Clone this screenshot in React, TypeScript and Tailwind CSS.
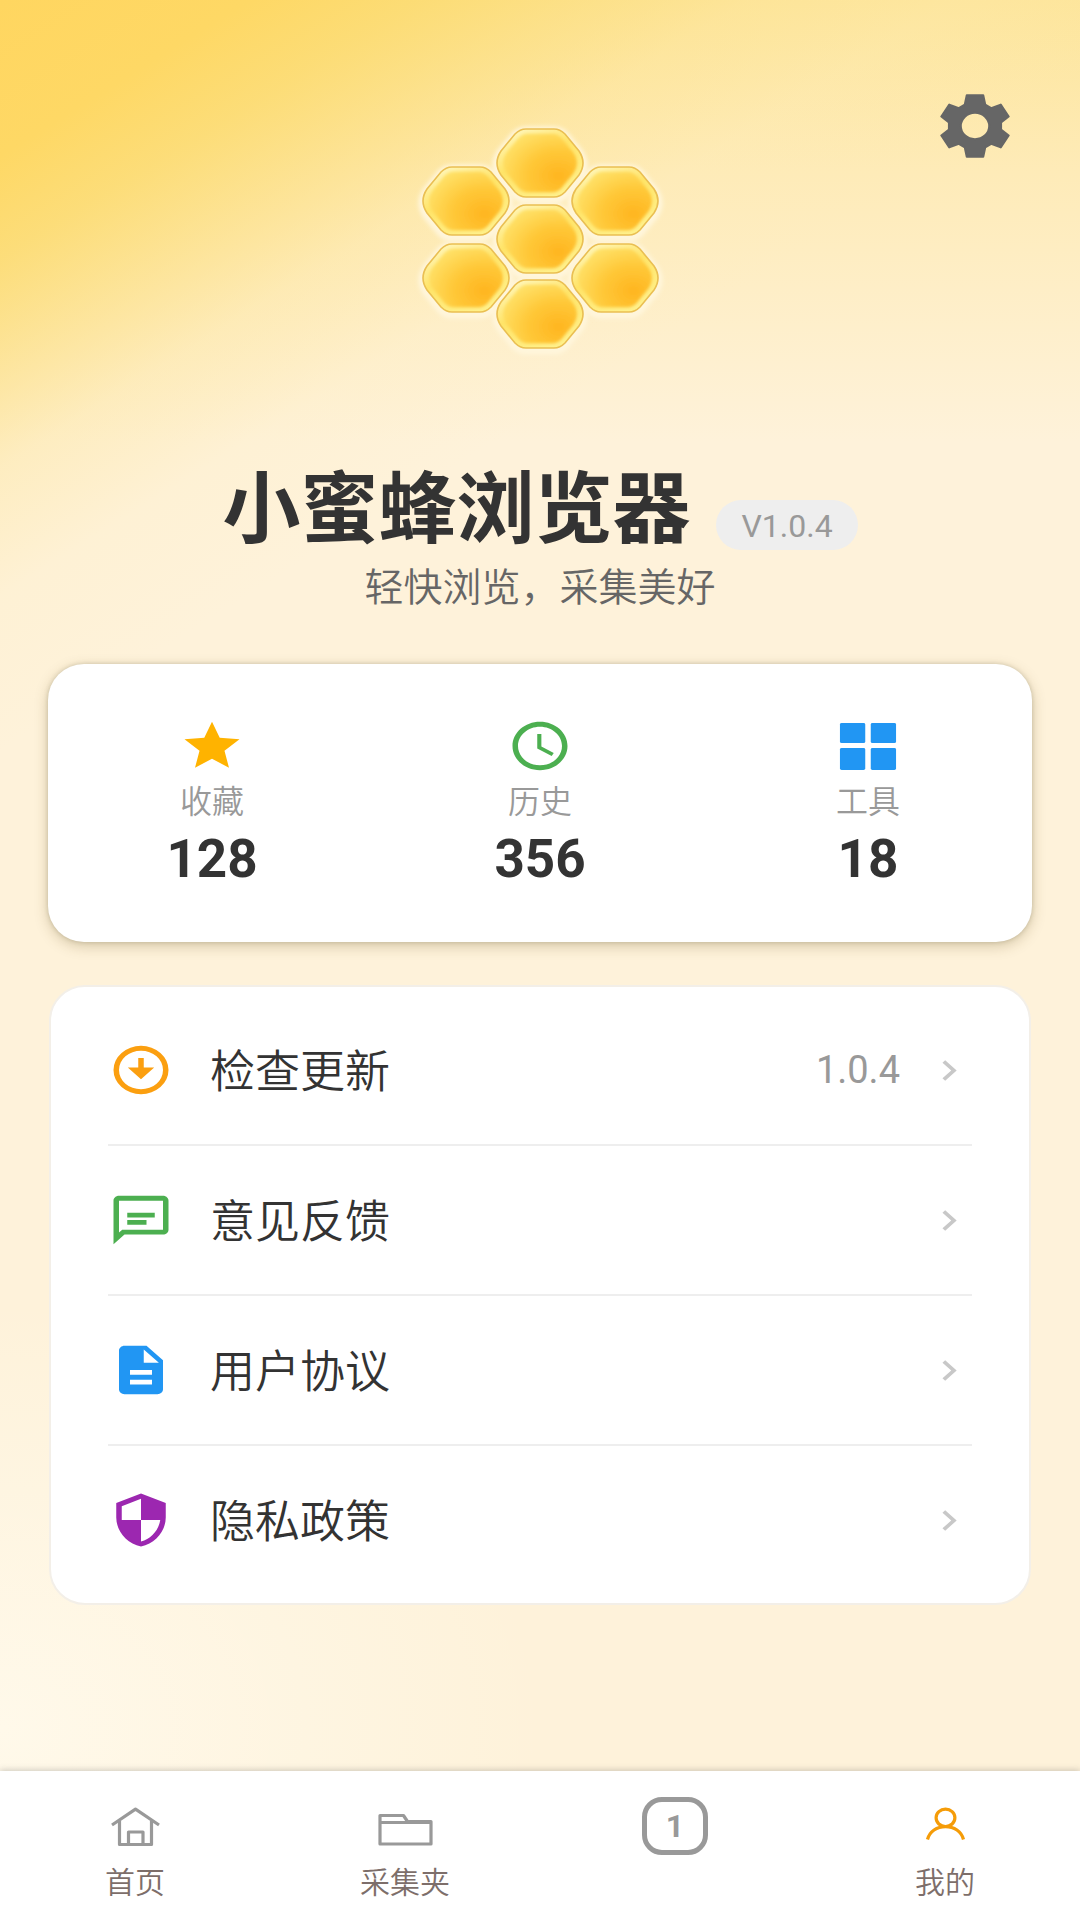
// Profile ("我的") page of the browser app.
// Header with the honeycomb logo, a stats card, a menu card and the bottom tab bar.

import type { ReactNode } from "react"

// Honeycomb logo

const CELLS = [
  [140, 53],
  [66, 91],
  [215, 91],
  [140, 129],
  [66, 168],
  [215, 168],
  [140, 204],
]

// One cell, centred on 0,0
const CELL_PATH =
  "M-14 -34H14Q20 -34 25 -29L39 -12Q47 0 39 12L25 29Q20 34 14 34H-14Q-20 34 -25 29L-39 12Q-47 0 -39 -12L-25 -29Q-20 -34 -14 -34Z"

function HoneycombLogo() {
  return (
    <svg className="w-[280px] h-[260px]" viewBox="0 0 280 260" role="img" aria-label="小蜜蜂浏览器">
      <defs>
        <radialGradient id="honey" cx="0.75" cy="0.72" r="0.85">
          <stop offset="0" stopColor="#ffb520" />
          <stop offset="0.5" stopColor="#ffc838" />
          <stop offset="1" stopColor="#ffe26a" />
        </radialGradient>
        <linearGradient id="rim" x1="0" y1="0" x2="0.6" y2="1">
          <stop offset="0" stopColor="#fffbd0" />
          <stop offset="0.5" stopColor="#ffe468" />
          <stop offset="1" stopColor="#fff08a" />
        </linearGradient>
        <filter id="glow" x="-20%" y="-20%" width="140%" height="140%">
          <feGaussianBlur stdDeviation="2" />
        </filter>
      </defs>
      {CELLS.map(([x, y]) => (
        <path key={`${x}-${y}`} d={CELL_PATH} transform={`translate(${x} ${y + 2})`} fill="#fff6dc" stroke="#fff6dc" strokeWidth="9" filter="url(#glow)" />
      ))}
      {CELLS.map(([x, y]) => (
        <g key={`${x}-${y}`} transform={`translate(${x} ${y})`}>
          <path d={CELL_PATH} fill="url(#rim)" stroke="#eabf52" strokeWidth="1.6" />
          <path d={CELL_PATH} transform="scale(0.86)" fill="url(#honey)" filter="url(#glow)" />
        </g>
      ))}
    </svg>
  )
}

// Shared icon wrapper, the paths are on a 24 grid

interface IconProps {
  className: string
  viewBox?: string
  children: ReactNode
}

function Icon({ className, viewBox = "0 0 24 24", children }: IconProps) {
  return (
    <svg className={className} viewBox={viewBox} preserveAspectRatio="none" fill="currentColor" aria-hidden="true">
      {children}
    </svg>
  )
}

// Stats card data

interface Stat {
  label: string
  value: number
  color: string
  icon: ReactNode
}

const STATS: Stat[] = [
  {
    label: "收藏",
    value: 128,
    color: "text-[#ffb300]",
    icon: <path d="M12 17.27L18.18 21l-1.64-7.03L22 9.24l-7.19-.61L12 2 9.19 8.63 2 9.24l5.46 4.73L5.82 21z" />,
  },
  {
    label: "历史",
    value: 356,
    color: "text-[#4caf50]",
    icon: (
      <path d="M11.99 2C6.47 2 2 6.48 2 12s4.47 10 9.99 10C17.52 22 22 17.52 22 12S17.52 2 11.99 2zM12 20c-4.42 0-8-3.58-8-8s3.58-8 8-8 8 3.58 8 8-3.58 8-8 8zm.5-13H11v6l5.25 3.15.75-1.23-4.5-2.67z" />
    ),
  },
  {
    label: "工具",
    value: 18,
    color: "text-[#2196f3]",
    icon: (
      <>
        <rect x="1.8" y="2.5" width="9.2" height="8.3" rx="0.6" />
        <rect x="13" y="2.5" width="9.2" height="8.3" rx="0.6" />
        <rect x="1.8" y="12.8" width="9.2" height="9.1" rx="0.6" />
        <rect x="13" y="12.8" width="9.2" height="9.1" rx="0.6" />
      </>
    ),
  },
]

// Menu card data

interface MenuItem {
  label: string
  extra?: string
  color: string
  icon: ReactNode
}

const MENU: MenuItem[] = [
  {
    label: "检查更新",
    extra: "1.0.4",
    color: "text-[#fb9f10]",
    icon: (
      <path d="M12 2a10 10 0 1 0 0 20 10 10 0 0 0 0-20zm0 18a8 8 0 1 1 0-16 8 8 0 0 1 0 16zM11 7h2v4h3.8L12 15.8 7.2 11H11z" />
    ),
  },
  {
    label: "意见反馈",
    color: "text-[#4caf50]",
    icon: (
      <path d="M20 2H4c-1.1 0-2 .9-2 2v18l4-4h14c1.1 0 2-.9 2-2V4c0-1.1-.9-2-2-2zm0 14H5.17L4 17.17V4h16zM7 9h10v2H7zm0 3h7v2H7z" />
    ),
  },
  {
    label: "用户协议",
    color: "text-[#2196f3]",
    icon: (
      <path d="M14 2H6c-1.1 0-2 .9-2 2v16c0 1.1.9 2 2 2h12c1.1 0 2-.9 2-2V8l-6-6zm2 16H8v-2h8v2zm0-4H8v-2h8v2zm-3-5V3.5L18.5 9H13z" />
    ),
  },
  {
    label: "隐私政策",
    color: "text-[#9c27b0]",
    icon: (
      <path d="M12 1L3 5v6c0 5.55 3.84 10.74 9 12 5.16-1.26 9-6.45 9-12V5l-9-4zm0 10.99h7c-.53 4.12-3.28 7.79-7 8.94V12H5V6.3l7-3.11v8.8z" />
    ),
  },
]

function Header() {
  return (
    <header>
      <div className="grid grid-cols-[1fr_auto_1fr] items-start px-[70px] pt-[94px]">
        <div className="col-start-2 mt-[16px]">
          <HoneycombLogo />
        </div>
        <button type="button" className="justify-self-end text-[#666666]" aria-label="设置">
          <Icon className="w-[70px] h-[64px]" viewBox="-106 -97 212 194">
            <path
              fillRule="evenodd"
              stroke="currentColor"
              strokeWidth="6"
              strokeLinejoin="round"
              d="M-25 -93H25L31 -65L49 -54L78 -65L102 -29L79 -11V11L102 29L78 65L49 54L31 65L25 93H-25L-31 65L-49 54L-78 65L-102 29L-79 11V-11L-102 -29L-78 -65L-49 -54L-31 -65ZM-43 0a43 40 0 1 0 86 0a43 40 0 1 0 -86 0Z"
            />
          </Icon>
        </button>
      </div>

      <div className="mt-[102px] flex items-end justify-center gap-[26px]">
        <h1 className="text-[78px] leading-[78px] font-bold text-[#333333]">小蜜蜂浏览器</h1>
        <span className="flex h-[50px] items-center rounded-full bg-[#eeeeee] px-[25px] pt-[2px] text-[32px] leading-[36px] text-[#999999]">
          V1.0.4
        </span>
      </div>
      <p className="mt-[13px] text-center text-[39px] leading-[50px] font-[350] text-[#666666]">轻快浏览，采集美好</p>
    </header>
  )
}

function StatsCard() {
  return (
    <section className="mt-[51px] grid grid-cols-3 rounded-[36px] bg-white pt-[53px] pb-[53px] shadow-[0_4px_14px_rgba(90,70,20,0.25),0_0_4px_rgba(90,90,60,0.25)]">
      {STATS.map((stat) => (
        <button key={stat.label} type="button" className="flex flex-col items-center">
          <Icon className={`w-[66px] h-[58px] ${stat.color}`}>{stat.icon}</Icon>
          <span className="mt-[7px] text-[32px] leading-[40px] font-[350] text-[#999999]">{stat.label}</span>
          <span className="mt-[7px] text-[53px] leading-[60px] font-bold text-[#333333]">{stat.value}</span>
        </button>
      ))}
    </section>
  )
}

function MenuCard() {
  return (
    <section className="mx-[1px] mt-[43px] rounded-[36px] border-2 border-[#f3efe8] bg-white px-[57px] py-[9px]">
      <ul className="divide-y-2 divide-[#eeeeee]">
        {MENU.map((item) => (
          <li key={item.label}>
            <button type="button" className="flex h-[148px] w-full items-center text-left">
              <Icon className={`w-[66px] h-[58px] ${item.color}`}>{item.icon}</Icon>
              <span className="ml-[36px] flex-1 pt-[6px] text-[45px] leading-[60px] font-[350] text-[#333333]">{item.label}</span>
              {item.extra && <span className="mr-[26px] text-[38px] leading-[60px] text-[#999999]">{item.extra}</span>}
              <Icon className="w-[46px] h-[41px] text-[#c8c8c8]">
                <path d="M10 6L8.59 7.41 13.17 12l-4.58 4.59L10 18l6-6z" />
              </Icon>
            </button>
          </li>
        ))}
      </ul>
    </section>
  )
}

// Bottom tab bar

interface TabProps {
  label?: string
  current?: boolean
  children: ReactNode
}

function Tab({ label, current, children }: TabProps) {
  return (
    <button
      type="button"
      className="flex flex-col items-center gap-[10px]"
      aria-label={label ?? "窗口"}
      aria-current={current ? "page" : undefined}
    >
      {children}
      {label && <span className="text-[30px] leading-[36px] font-[350] text-[#7d6e6a]">{label}</span>}
    </button>
  )
}

function TabBar() {
  return (
    <nav className="sticky bottom-0 mt-auto grid h-[149px] grid-cols-4 items-start bg-white pt-[26px] shadow-[0_-1px_6px_rgba(90,90,90,0.3)]">
      <Tab label="首页">
        <Icon className="w-[66px] h-[58px] text-[#999999]" viewBox="0 0 66 58">
          <g fill="none" stroke="currentColor" strokeWidth="3.2" strokeLinejoin="round">
            <path d="M10 28L33.5 12.2 57 28" />
            <path d="M17.5 24v23.5h32V24" />
            <path d="M26.5 48V35H41v13" />
          </g>
        </Icon>
      </Tab>
      <Tab label="采集夹">
        <Icon className="w-[66px] h-[58px] text-[#999999]" viewBox="0 0 66 58">
          <g fill="none" stroke="currentColor" strokeWidth="3.2" strokeLinejoin="round">
            <path d="M8 18.5h23.5l4 6H59V47H8z" />
            <path d="M8 25.5h51" />
          </g>
        </Icon>
      </Tab>
      <Tab>
        <span className="flex h-[58px] w-[66px] items-center justify-center rounded-[20px] border-[5px] border-[#999999] text-[32px] leading-[36px] font-bold text-[#999999]">
          1
        </span>
      </Tab>
      <Tab label="我的" current>
        <Icon className="w-[66px] h-[58px] text-[#f59c08]" viewBox="0 0 66 58">
          <g fill="none" stroke="currentColor" strokeWidth="3.2">
            <ellipse cx="33.5" cy="20.8" rx="9.4" ry="8.7" />
            <path d="M15.5 42.5C17.5 34.5 25 29.6 33.5 29.6S49.5 34.5 51.5 42.5" />
          </g>
        </Icon>
      </Tab>
    </nav>
  )
}

export default function App() {
  return (
    <div className="flex min-h-screen flex-col bg-[#fef2da] bg-[linear-gradient(148deg,#ffd660_0%,#fed865_6%,rgba(252,219,112,0.88)_10%,rgba(252,222,126,0.64)_14%,rgba(253,228,150,0.38)_18%,rgba(254,236,184,0.16)_23%,rgba(254,242,218,0)_29%),linear-gradient(180deg,#fde59a_0%,#feebb8_9%,rgba(254,242,218,0)_23%),radial-gradient(ellipse_50%_22%_at_0%_90%,#fff9ea_0%,rgba(254,242,218,0)_100%)] font-[Roboto,'Noto_Sans_CJK_SC',sans-serif]">
      <main className="px-[48px] pb-[40px]">
        <div className="-mx-[48px]">
          <Header />
        </div>
        <StatsCard />
        <MenuCard />
      </main>
      <TabBar />
    </div>
  )
}
